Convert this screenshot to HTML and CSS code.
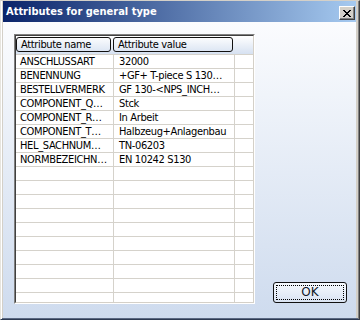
FILE: index.html
```html
<!DOCTYPE html>
<html lang="en">
<head>
    <meta charset="UTF-8">
    <meta name="viewport" content="width=device-width, initial-scale=1.0">
    <title>Attributes for general type</title>
    <link rel="stylesheet" href="styles.css">
</head>
<body>

<div class="window">
    <!-- Title bar -->
    <div class="titlebar">
        <span class="title">Attributes for general type</span>
        <button class="close-btn" aria-label="Close">
            <svg width="8" height="7" viewBox="0 0 8 7" shape-rendering="crispEdges">
                <path fill="#000" d="M0 0h2v1H0zM6 0h2v1H6zM1 1h2v1H1zM5 1h2v1H5zM2 2h4v1H2zM3 3h2v1H3zM2 4h4v1H2zM1 5h2v1H1zM5 5h2v1H5zM0 6h2v1H0zM6 6h2v1H6z"/>
            </svg>
        </button>
    </div>

    <div class="client">
        <!-- Attribute list -->
        <div class="list">
            <div class="list-inner">
                <div class="list-head">
                    <div class="col-head col-name">Attribute name</div>
                    <div class="col-head col-value">Attribute value</div>
                </div>
                <div class="list-body">
                    <div class="row"><span class="cell">ANSCHLUSSART</span><span class="cell">32000</span><span class="cell"></span></div>
                    <div class="row"><span class="cell">BENENNUNG</span><span class="cell">+GF+ T-piece S 130…</span><span class="cell"></span></div>
                    <div class="row"><span class="cell">BESTELLVERMERK</span><span class="cell">GF 130-&lt;NPS_INCH…</span><span class="cell"></span></div>
                    <div class="row"><span class="cell">COMPONENT_Q…</span><span class="cell">Stck</span><span class="cell"></span></div>
                    <div class="row"><span class="cell">COMPONENT_R…</span><span class="cell">In Arbeit</span><span class="cell"></span></div>
                    <div class="row"><span class="cell">COMPONENT_T…</span><span class="cell">Halbzeug+Anlagenbau</span><span class="cell"></span></div>
                    <div class="row"><span class="cell">HEL_SACHNUM…</span><span class="cell">TN-06203</span><span class="cell"></span></div>
                    <div class="row"><span class="cell">NORMBEZEICHN…</span><span class="cell">EN 10242 S130</span><span class="cell"></span></div>
                    <div class="row"><span class="cell"></span><span class="cell"></span><span class="cell"></span></div>
                    <div class="row"><span class="cell"></span><span class="cell"></span><span class="cell"></span></div>
                    <div class="row"><span class="cell"></span><span class="cell"></span><span class="cell"></span></div>
                    <div class="row"><span class="cell"></span><span class="cell"></span><span class="cell"></span></div>
                    <div class="row"><span class="cell"></span><span class="cell"></span><span class="cell"></span></div>
                    <div class="row"><span class="cell"></span><span class="cell"></span><span class="cell"></span></div>
                    <div class="row"><span class="cell"></span><span class="cell"></span><span class="cell"></span></div>
                    <div class="row"><span class="cell"></span><span class="cell"></span><span class="cell"></span></div>
                    <div class="row"><span class="cell"></span><span class="cell"></span><span class="cell"></span></div>
                    <div class="row"><span class="cell"></span><span class="cell"></span><span class="cell"></span></div>
                </div>
            </div>
        </div>

        <button class="ok-btn"><span class="focus">OK</span></button>
    </div>
</div>

</body>
</html>
```

FILE: styles.css
```css
* {
    box-sizing: border-box;
}

body {
    margin: 0;
    font-family: "DejaVu Sans Condensed", "DejaVu Sans", sans-serif;
    font-stretch: condensed;
    font-size: 11px;
    color: #000;
}

/* Window frame */
.window {
    width: 360px;
    height: 320px;
    display: flex;
    flex-direction: column;
    background-color: #d4d0c8;
    border-top: 1px solid #d4d0c8;
    border-left: 1px solid #e6e4de;
    border-right: 1px solid #404040;
    border-bottom: 1px solid #2d3a52;
    padding: 0 3px 1px 2px;
    box-shadow: inset 1px 0 #ffffff, inset -1px 0 #808080, inset 0 -1px #5a6882;
}

/* Title bar */
.titlebar {
    height: 21px;
    display: flex;
    align-items: flex-start;
    justify-content: space-between;
    background: linear-gradient(to right, #0a246a, #a6caf0);
}

.title {
    color: #fff;
    font-weight: bold;
    line-height: 20px;
    padding-top: 1px;
    padding-left: 3px;
    white-space: nowrap;
}

.close-btn {
    width: 16px;
    height: 14px;
    margin-top: 5px;
    margin-right: 1px;
    padding: 0;
    display: flex;
    align-items: center;
    justify-content: center;
    background-color: #d4d0c8;
    border: 1px solid;
    border-color: #fff #404040 #404040 #fff;
    box-shadow: inset -1px -1px #808080;
}

/* Dialog body */
.client {
    flex: 1;
    display: flex;
    align-items: flex-start;
    padding: 12px 0 0 11px;
    background: linear-gradient(to bottom, #fbfcfe, #cedbee);
}

.list {
    width: 241px;
    height: 270px;
    border: 1px solid;
    border-color: #808080 #fff #fff #808080;
    letter-spacing: -0.35px;
}

.list-inner {
    height: 100%;
    display: flex;
    flex-direction: column;
    background-color: #fff;
    border: 1px solid;
    border-color: #404040 #d4d0c8 #d4d0c8 #404040;
    overflow: hidden;
}

.list-head {
    height: 18px;
    flex-shrink: 0;
    display: flex;
    gap: 2px;
    background: linear-gradient(to bottom, #ffffff, #d6e1f1);
}

.col-head {
    height: 15px;
    margin-top: 1px;
    padding-left: 4px;
    line-height: 13px;
    border: 1px solid #111;
    border-radius: 3px;
    white-space: nowrap;
}

.col-name {
    width: 95px;
}

.col-value {
    width: 120px;
}

.row {
    display: grid;
    grid-template-columns: 98px 121px 1fr;
    height: 14px;
    flex-shrink: 0;
    border-top: 1px solid #d5d2cb;
}

.cell {
    line-height: 13px;
    padding-left: 4px;
    white-space: nowrap;
    overflow: hidden;
    border-right: 1px solid #d5d2cb;
}

.cell:nth-child(2) {
    padding-left: 5px;
}

.cell:last-child {
    border-right: none;
}

/* OK button */
.ok-btn {
    width: 74px;
    height: 21px;
    margin-top: 248px;
    margin-left: 18px;
    padding: 2px;
    font-family: "DejaVu Sans", sans-serif;
    font-size: 12px;
    color: #101828;
    border: 1px solid #111;
    border-radius: 3px;
    background: linear-gradient(to bottom, #f6f9fd, #d9e3f2);
}

.ok-btn .focus {
    display: block;
    height: 100%;
    line-height: 13px;
    border: 1px dotted #000;
}
```
